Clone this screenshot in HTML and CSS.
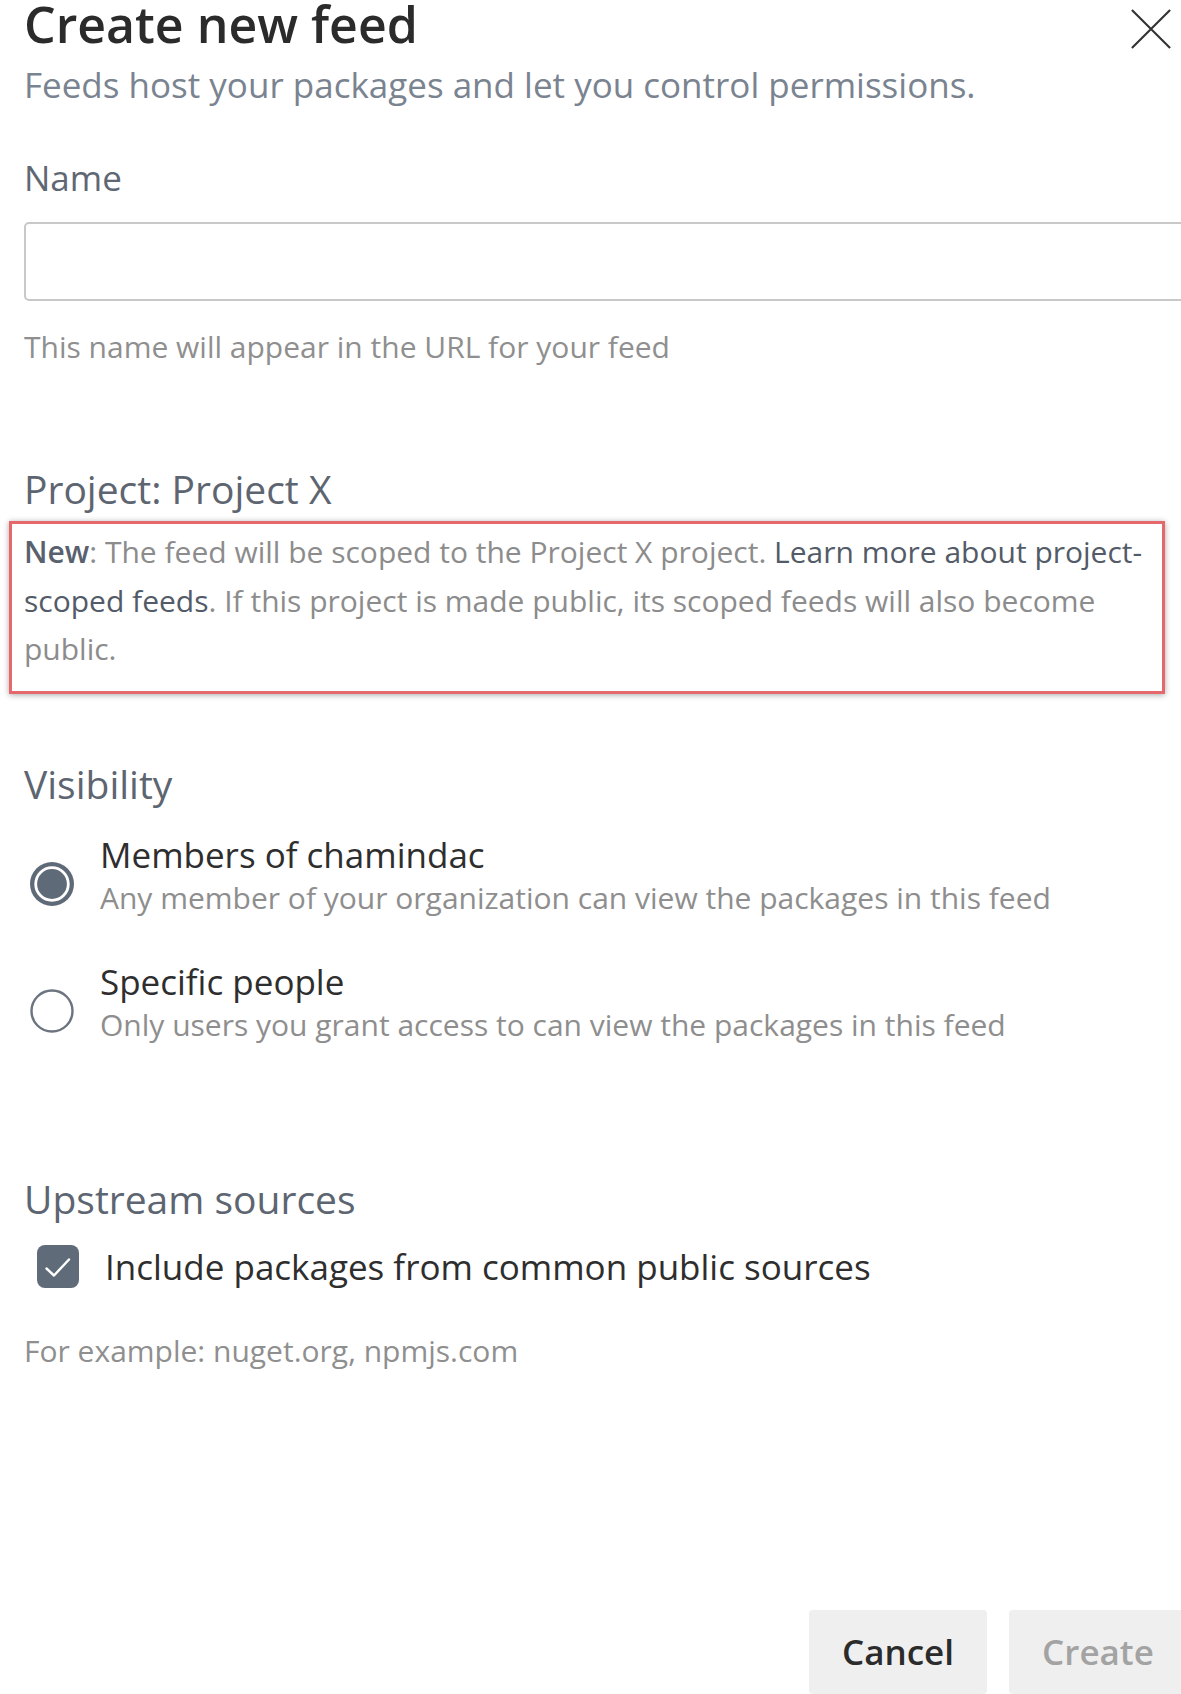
FILE: index.html
```html
<!DOCTYPE html>
<html lang="en">
<head>
<meta charset="utf-8">
<title>Create new feed</title>
<link rel="stylesheet" href="styles.css">
</head>
<body>
<div class="page">
  <header class="header">
    <h1 class="title">Create new feed</h1>
    <button class="close" aria-label="Close">
      <svg width="44" height="44" viewBox="0 0 44 44"><path d="M2 2 L42 42 M42 2 L2 42" stroke="#333" stroke-width="2.2" fill="none"/></svg>
    </button>
  </header>
  <p class="subtitle">Feeds host your packages and let you control permissions.</p>

  <label class="field-label" for="feedname">Name</label>
  <input class="text-input" id="feedname" type="text">
  <p class="helper">This name will appear in the URL for your feed</p>

  <h2 class="section-title project-title">Project: Project X</h2>
  <div class="notice">
    <p class="notice-text"><strong class="notice-new">New</strong>: The feed will be scoped to the Project X project. <a class="notice-link">Learn more about project-scoped feeds</a>. If this project is made public, its scoped feeds will also become public.</p>
  </div>

  <h2 class="section-title visibility-title">Visibility</h2>
  <div class="options">
    <div class="option">
      <span class="radio">
        <svg width="44" height="44" viewBox="0 0 44 44"><circle cx="22" cy="22" r="22" fill="#5f6a79"/><circle cx="22" cy="22" r="16.3" fill="none" stroke="#fff" stroke-width="2.8"/></svg>
      </span>
      <div class="option-body">
        <div class="option-label">Members of chamindac</div>
        <div class="option-desc">Any member of your organization can view the packages in this feed</div>
      </div>
    </div>
    <div class="option">
      <span class="radio">
        <svg width="44" height="44" viewBox="0 0 44 44"><circle cx="22" cy="22" r="20.5" fill="#fff" stroke="#6c7480" stroke-width="2.4"/></svg>
      </span>
      <div class="option-body">
        <div class="option-label">Specific people</div>
        <div class="option-desc">Only users you grant access to can view the packages in this feed</div>
      </div>
    </div>
  </div>

  <h2 class="section-title upstream-title">Upstream sources</h2>
  <div class="check-row">
    <span class="checkbox">
      <svg width="42" height="43" viewBox="0 0 42 43"><path d="M9.5 23.5 L17 30.5 L32 14.5" stroke="#fff" stroke-width="2.4" fill="none" stroke-linecap="round" stroke-linejoin="round"/></svg>
    </span>
    <span class="check-label">Include packages from common public sources</span>
  </div>
  <p class="helper example">For example: nuget.org, npmjs.com</p>

  <footer class="footer">
    <button class="btn btn-cancel">Cancel</button>
    <button class="btn btn-create" disabled>Create</button>
  </footer>
</div>
</body>
</html>
```

FILE: styles.css
```css
html, body {
  margin: 0;
  padding: 0;
  background: #ffffff;
}

body {
  font-family: "Open Sans", "Noto Sans", "DejaVu Sans", sans-serif;
  overflow: hidden;
}

.page {
  width: 1181px;
  height: 1694px;
  box-sizing: border-box;
  padding-left: 24px;
  overflow: hidden;
  display: flex;
  flex-direction: column;
  align-items: stretch;
}

.header {
  display: flex;
  justify-content: space-between;
  align-items: flex-start;
  padding-right: 9px;
}

.title {
  margin: 0;
  font-size: 50px;
  line-height: 48px;
  font-weight: 600;
  color: #2b2b2b;
}

.close {
  margin-top: 8px;
  padding: 0;
  border: 0;
  background: transparent;
  width: 42px;
  height: 42px;
  display: flex;
  align-items: center;
  justify-content: center;
}

.subtitle {
  margin: 15px 0 0;
  font-size: 35px;
  line-height: 40px;
  color: #7a8390;
}

.field-label {
  display: block;
  margin-top: 53px;
  font-size: 35px;
  line-height: 40px;
  color: #5f6773;
}

.text-input {
  display: block;
  margin-top: 24px;
  width: calc(100% + 40px);
  height: 79px;
  box-sizing: border-box;
  border: 2px solid #c8c8c8;
  border-radius: 5px;
  background: #fff;
}

.helper {
  margin: 26px 0 0;
  font-size: 30px;
  line-height: 40px;
  color: #8f8f8f;
}

.section-title {
  margin: 0;
  font-size: 39px;
  line-height: 46px;
  font-weight: 400;
  color: #5d6571;
}

.project-title {
  margin-top: 99px;
}

.notice {
  margin: 9px 16px 0 -15px;
  border: 3px solid #e5686d;
  padding: 4px 6px 17px 12px;
  box-shadow: 0 1px 6px rgba(0, 0, 0, 0.35);
}

.notice-text {
  margin: 0;
  font-size: 30px;
  line-height: 48.5px;
  color: #8c8c8c;
}

.notice-new {
  font-weight: 600;
  color: #58616d;
}

.notice-link {
  color: #525b67;
  text-decoration: none;
}

.visibility-title {
  margin-top: 67px;
}

.options {
  display: flex;
  flex-direction: column;
  gap: 42px;
  margin-top: 26px;
}

.option {
  display: flex;
  align-items: flex-start;
}

.radio {
  margin: 29px 26px 0 6px;
  width: 44px;
  height: 44px;
  flex: none;
  display: block;
}

.radio svg {
  display: block;
}

.option-label {
  font-size: 35px;
  line-height: 44px;
  color: #2e2e2e;
}

.option-desc {
  font-size: 30px;
  line-height: 41px;
  color: #8e8e8e;
}

.upstream-title {
  margin-top: 131px;
}

.check-row {
  display: flex;
  align-items: center;
  margin-top: 23px;
}

.checkbox {
  margin-left: 13px;
  margin-right: 26px;
  width: 42px;
  height: 43px;
  border-radius: 8px;
  background: #606b7a;
  flex: none;
}

.checkbox svg {
  display: block;
}

.check-label {
  font-size: 35px;
  line-height: 44px;
  color: #2e2e2e;
}

.example {
  margin-top: 42px;
}

.footer {
  display: flex;
  justify-content: flex-end;
  gap: 22px;
  margin-top: 239px;
  margin-right: -6px;
}

.btn {
  width: 178px;
  height: 84px;
  border: 0;
  border-radius: 4px;
  background: #efefef;
  font-family: "Open Sans", "Noto Sans", sans-serif;
  font-size: 35px;
  font-weight: 600;
  padding: 0;
}

.btn-cancel {
  color: #2b2b2b;
}

.btn-create {
  color: #a3a3a3;
}
```
